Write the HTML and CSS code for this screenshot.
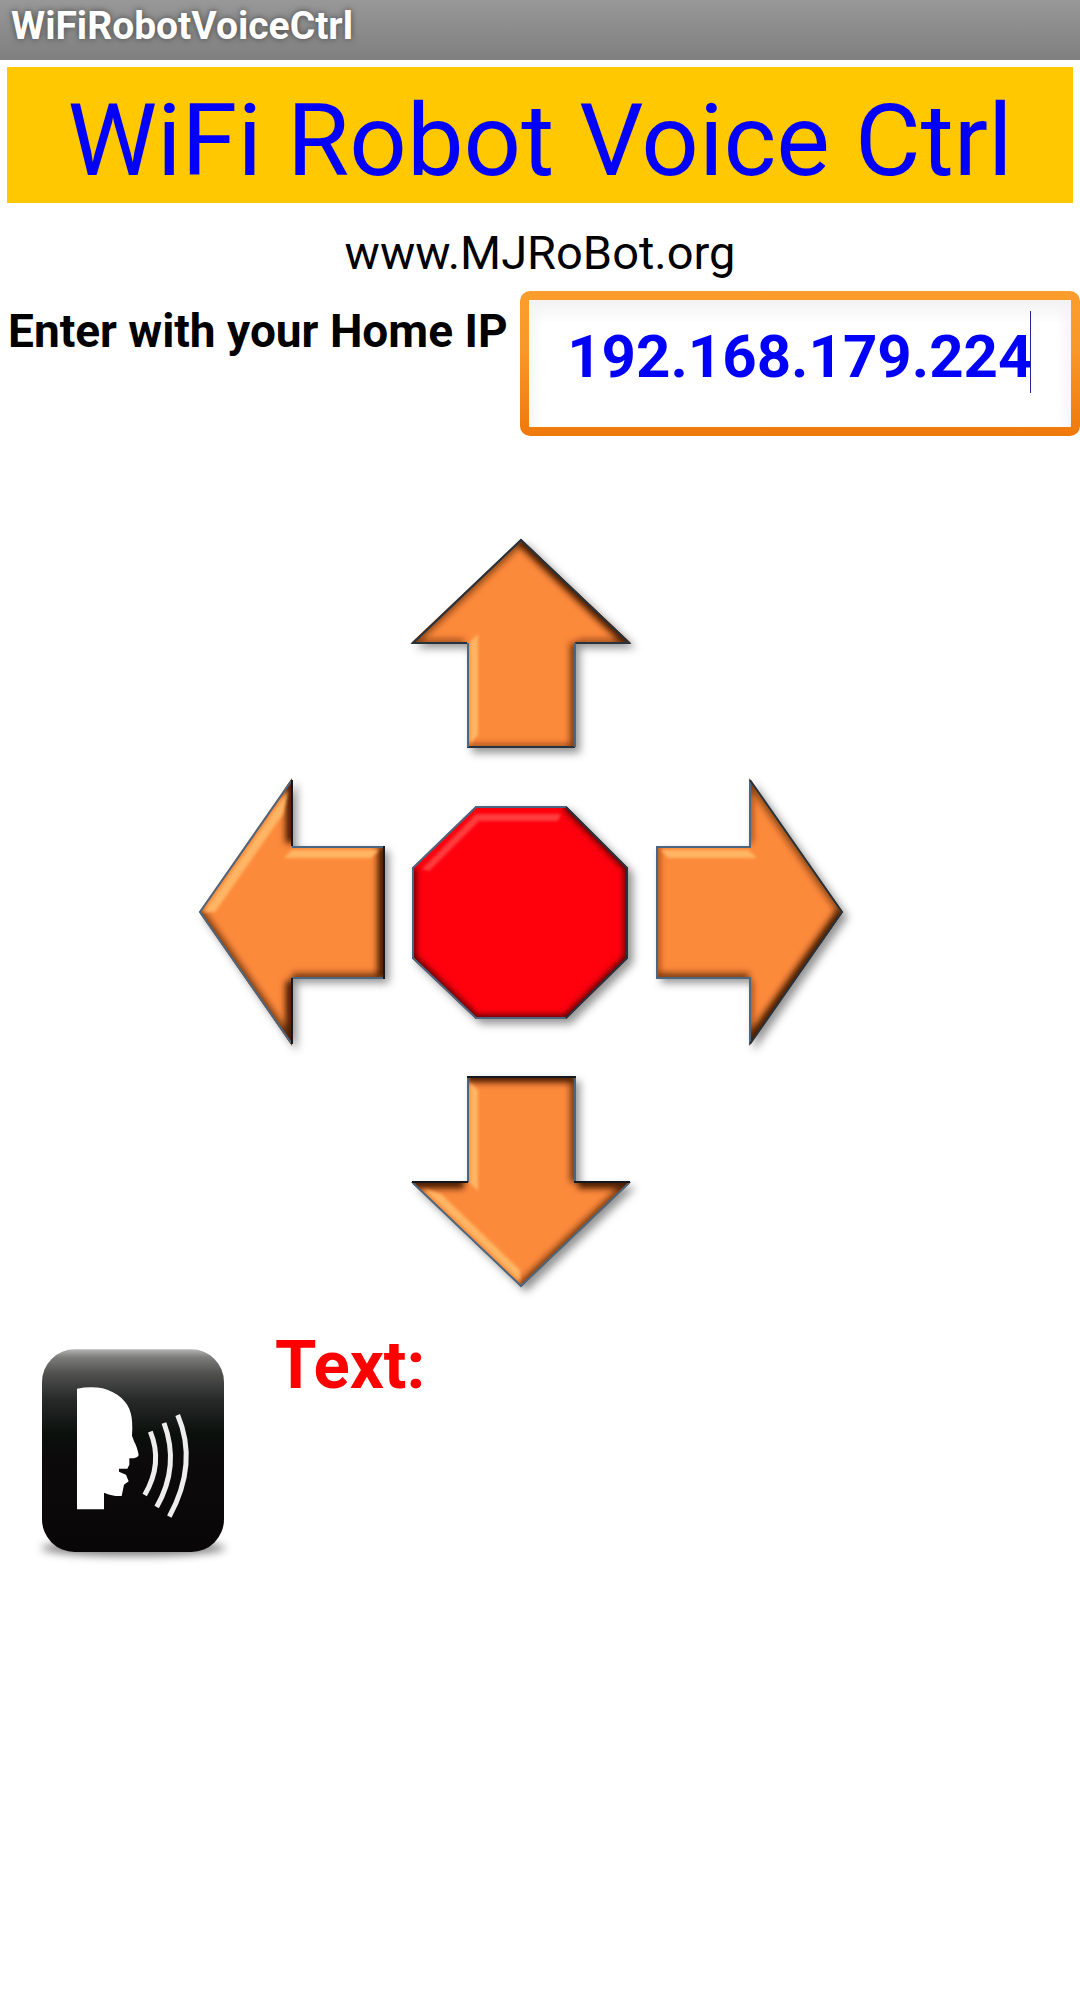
FILE: index.html
```html
<!DOCTYPE html>
<html lang="en">
<head>
<meta charset="utf-8">
<meta name="viewport" content="width=device-width, initial-scale=1">
<title>WiFiRobotVoiceCtrl</title>
<link rel="stylesheet" href="styles.css">
</head>
<body>
<svg class="defs" aria-hidden="true">
  <defs>
    <filter id="drop" x="-20%" y="-20%" width="140%" height="140%">
      <feDropShadow dx="5" dy="5" stdDeviation="4" flood-color="#000" flood-opacity="0.42"/>
    </filter>
    <filter id="soft" filterUnits="userSpaceOnUse" x="-20" y="-20" width="320" height="320"><feGaussianBlur stdDeviation="3"/></filter>
    <filter id="glow" filterUnits="userSpaceOnUse" x="-20" y="-20" width="320" height="320"><feGaussianBlur stdDeviation="1.5"/></filter>
    <clipPath id="upClip"><path d="M111 1 221 105H165V210H57V105H1Z"/></clipPath>
    <clipPath id="leftClip"><path d="M1 135 94 1V69H186V201H94V269Z"/></clipPath>
    <clipPath id="rightClip"><path d="M1 69H94V1L188 135 94 269V201H1Z"/></clipPath>
    <clipPath id="downClip"><path d="M57 1H165V107H221L111 212 1 107H57Z"/></clipPath>
    <clipPath id="stopClip"><path d="M66 0H156L218 62V152L156 213H66L2 152V62Z"/></clipPath>
  </defs>
</svg>

<header class="titlebar">WiFiRobotVoiceCtrl</header>

<main>
  <h1 class="banner">WiFi Robot Voice Ctrl</h1>
  <p class="site">www.MJRoBot.org</p>

  <div class="ip-row">
    <label class="ip-label" for="ip">Enter with your Home IP</label>
    <div class="ip-field">
      <input class="ip-input" id="ip" type="text" value="192.168.179.224" autocomplete="off">
      <span class="caret"></span>
    </div>
  </div>

  <div class="pad">
    <button class="key key-up" type="button" aria-label="Forward">
      <svg width="222" height="211" viewBox="0 0 222 211">
        <g filter="url(#drop)"><path class="face" d="M111 1 221 105H165V210H57V105H1Z"/></g>
        <g clip-path="url(#upClip)">
          <g filter="url(#soft)">
            <path class="dark" d="M111 1 221 105"/>
            <path class="shade" d="M111 1 1 105"/>
            <path class="mid" d="M165 105V210"/>
            <path class="faint" d="M1 105H54M168 105H221M57 210H165"/>
          </g>
          <path class="light" filter="url(#glow)" d="M60 104 68 96V197L60 206Z"/>
        </g>
        <path class="edge edge-dark" d="M57 209H165M165 105H219L111 2 3 105H57"/>
        <path class="edge" d="M58 105V209M165 105V209"/>
      </svg>
    </button>
    <button class="key key-left" type="button" aria-label="Left">
      <svg width="187" height="270" viewBox="0 0 187 270">
        <g filter="url(#drop)"><path class="face" d="M1 135 94 1V69H186V201H94V269Z"/></g>
        <g clip-path="url(#leftClip)">
          <g filter="url(#soft)">
            <path class="dark" d="M94 1V66M94 204V269M186 69V201"/>
            <path class="mid" d="M94 201H186M1 135 94 269"/>
          </g>
          <path class="light" filter="url(#glow)" d="M94 73H181L173 81H86ZM6 135 90 14 85 37 17 135Z"/>
        </g>
        <path class="edge" d="M94 201H186M94 70H186M94 3 2 135 94 267"/>
        <path class="edge edge-black" d="M94 3V69M186 69V202M94 201V267"/>
      </svg>
    </button>
    <button class="key key-stop" type="button" aria-label="Stop">
      <svg width="222" height="213" viewBox="0 0 222 213">
        <g filter="url(#drop)"><path class="face face-red" d="M66 0H156L218 62V152L156 213H66L2 152V62Z"/></g>
        <g clip-path="url(#stopClip)">
          <g class="red-shade" filter="url(#soft)">
            <path d="M156 0 218 62V152L156 213H66L2 152V62"/>
          </g>
          <path class="light light-red" filter="url(#glow)" d="M12 63 66 8H151L148 15H69L19 65Z"/>
        </g>
        <path class="edge" d="M156 1H66L3 62V152L66 212H156"/>
        <path class="edge edge-dark" d="M156 1 217 62V152L156 212"/>
      </svg>
    </button>
    <button class="key key-right" type="button" aria-label="Right">
      <svg width="187" height="270" viewBox="2 0 187 270">
        <g filter="url(#drop)"><path class="face" d="M1 69H94V1L188 135 94 269V201H1Z"/></g>
        <g clip-path="url(#rightClip)">
          <g filter="url(#soft)">
            <path class="dark" d="M188 135 94 269"/>
            <path class="shade" d="M94 1 188 135"/>
            <path class="mid" d="M1 201H94"/>
            <path class="faint" d="M1 69V201M94 1V66M94 204V269"/>
          </g>
          <path class="light" filter="url(#glow)" d="M6 73H93L102 81H13Z"/>
        </g>
        <path class="edge" d="M95 3V70H2V201H95V267"/>
        <path class="edge edge-dark" d="M95 3 187 135 95 267"/>
      </svg>
    </button>
    <button class="key key-down" type="button" aria-label="Backward">
      <svg width="222" height="213" viewBox="0 0 222 213">
        <g filter="url(#drop)"><path class="face" d="M57 1H165V107H221L111 212 1 107H57Z"/></g>
        <g clip-path="url(#downClip)">
          <g filter="url(#soft)">
            <path class="dark" d="M57 1H165M1 107H54M168 107H221"/>
            <path class="mid" d="M165 1V107M221 107 111 212"/>
          </g>
          <path class="light" filter="url(#glow)" d="M60 8 68 15V116L60 108ZM14 114 31 119 110 195V206Z"/>
        </g>
        <path class="edge" d="M58 1V107M165 1V107M3 108 111 211 219 108"/>
        <path class="edge edge-black" d="M57 2H166M2 107H58M164 107H220"/>
      </svg>
    </button>
  </div>

  <div class="voice-row">
    <button class="key" type="button" aria-label="Speak">
      <svg width="240" height="260" viewBox="0 0 720 780">
        <defs>
          <linearGradient id="gloss" x1="0" y1="0" x2="0" y2="1">
            <stop offset="0" stop-color="#b4b4b4"/>
            <stop offset="0.04" stop-color="#7c7c7b"/>
            <stop offset="0.12" stop-color="#50504f"/>
            <stop offset="0.25" stop-color="#262928"/>
            <stop offset="0.42" stop-color="#0a0f0c"/>
            <stop offset="0.55" stop-color="#0c0a0b"/>
            <stop offset="1" stop-color="#080607"/>
          </linearGradient>
          <filter id="ground" x="-20%" y="-100%" width="140%" height="300%"><feGaussianBlur stdDeviation="12"/></filter>
        </defs>
        <ellipse cx="340" cy="684" rx="276" ry="24" fill="#000" opacity="0.5" filter="url(#ground)"/>
        <rect x="66" y="88" width="546" height="608" rx="98" fill="url(#gloss)"/>
        <path fill="#fff" d="M171 206Q212 198 248 205C292 217 324 245 332 279Q339 302 336 347L343 366Q351 379 356 405Q353 416 328 415V434L322 446H297V455L318 464 326 484 312 494 305 528Q280 530 252 518V568H171Z"/>
        <g fill="none" stroke="#eee" stroke-width="15">
          <path d="M391 335Q430 430 374 525"/>
          <path d="M432 309Q480 438 410 561"/>
          <path d="M473 285Q535 430 448 590"/>
        </g>
      </svg>
    </button>
    <output class="heard">Text:</output>
  </div>
</main>
</body>
</html>
```
FILE: styles.css
```css
* {
  box-sizing: border-box;
}

body {
  margin: 0;
  background: #fff;
  color: #000;
  font-family: Roboto, "Liberation Sans", sans-serif;
}

.defs {
  position: absolute;
  width: 0;
  height: 0;
}

.titlebar {
  height: 60px;
  padding-left: 11px;
  background: linear-gradient(#989898, #7f7f7f);
  color: #fff;
  font-size: 39px;
  font-weight: 700;
  line-height: 52px;
  text-shadow: 0 0 6px #444;
}

.banner {
  margin: 7px 7px 0;
  padding-top: 12px;
  background: #ffc800;
  color: #0000fa;
  font-size: 101px;
  font-weight: 400;
  line-height: 124px;
  text-align: center;
}

.site {
  margin: 22px 0 10px;
  font-size: 47px;
  line-height: 56px;
  text-align: center;
}

.ip-row {
  display: flex;
  align-items: flex-start;
}

.ip-label {
  padding: 12px 12px 0 8px;
  font-size: 46px;
  font-weight: 700;
  line-height: 56px;
  white-space: nowrap;
}

.ip-field {
  position: relative;
  flex: 1;
  min-width: 0;
}

.ip-input {
  display: block;
  width: 100%;
  height: 145px;
  padding: 0 0 15px;
  border: 9px solid transparent;
  border-radius: 10px;
  outline: 0;
  background:
    linear-gradient(#f2f2f2, #fff0 24px) padding-box,
    linear-gradient(90deg, #f6f6f6, #fff 14px, #fff calc(100% - 14px), #f6f6f6) padding-box,
    linear-gradient(#fb9d2d, #f9982a 40%, #ef780b) border-box;
  color: #0000fa;
  font: 700 60px/70px Roboto, "Liberation Sans", sans-serif;
  text-align: center;
}

.caret {
  position: absolute;
  top: 20px;
  right: 49px;
  width: 1px;
  height: 82px;
  background: #26269c;
}

.pad {
  display: grid;
  grid-template-columns: 187px 222px 187px;
  grid-template-areas:
    ". up ."
    "left stop right"
    ". down .";
  gap: 28px 25px;
  place-content: center;
  place-items: center;
  padding: 102px 38px 32px 0;
}

.key {
  display: block;
  padding: 0;
  border: 0;
  background: none;
}

.key svg {
  display: block;
  overflow: visible;
}

.key-up { grid-area: up; }
.key-left { grid-area: left; }
.key-stop { grid-area: stop; }
.key-right { grid-area: right; }
.key-down { grid-area: down; }

.face { fill: #fc8a3b; }
.face-red { fill: #ff0508; }

.dark,
.shade,
.mid,
.faint {
  fill: none;
  stroke: #4a1c00;
}

.dark { stroke-width: 13px; }
.shade { stroke-width: 10px; opacity: 0.6; }
.mid { stroke-width: 10px; opacity: 0.7; }
.faint { stroke-width: 8px; opacity: 0.5; }

.red-shade path {
  fill: none;
  stroke: #500000;
  stroke-width: 8px;
}

.light { fill: #ffb564; }
.light-red { fill: #ff3c3c; }

.edge {
  fill: none;
  stroke: #4a6680;
  stroke-width: 2px;
}

.edge-dark { stroke: #26323e; }
.edge-black { stroke: #15181c; }

.voice-row {
  display: flex;
  align-items: flex-start;
  gap: 15px;
  padding-left: 20px;
}

.heard {
  color: #ff0000;
  font-size: 67px;
  font-weight: 700;
  line-height: 90px;
}
```
